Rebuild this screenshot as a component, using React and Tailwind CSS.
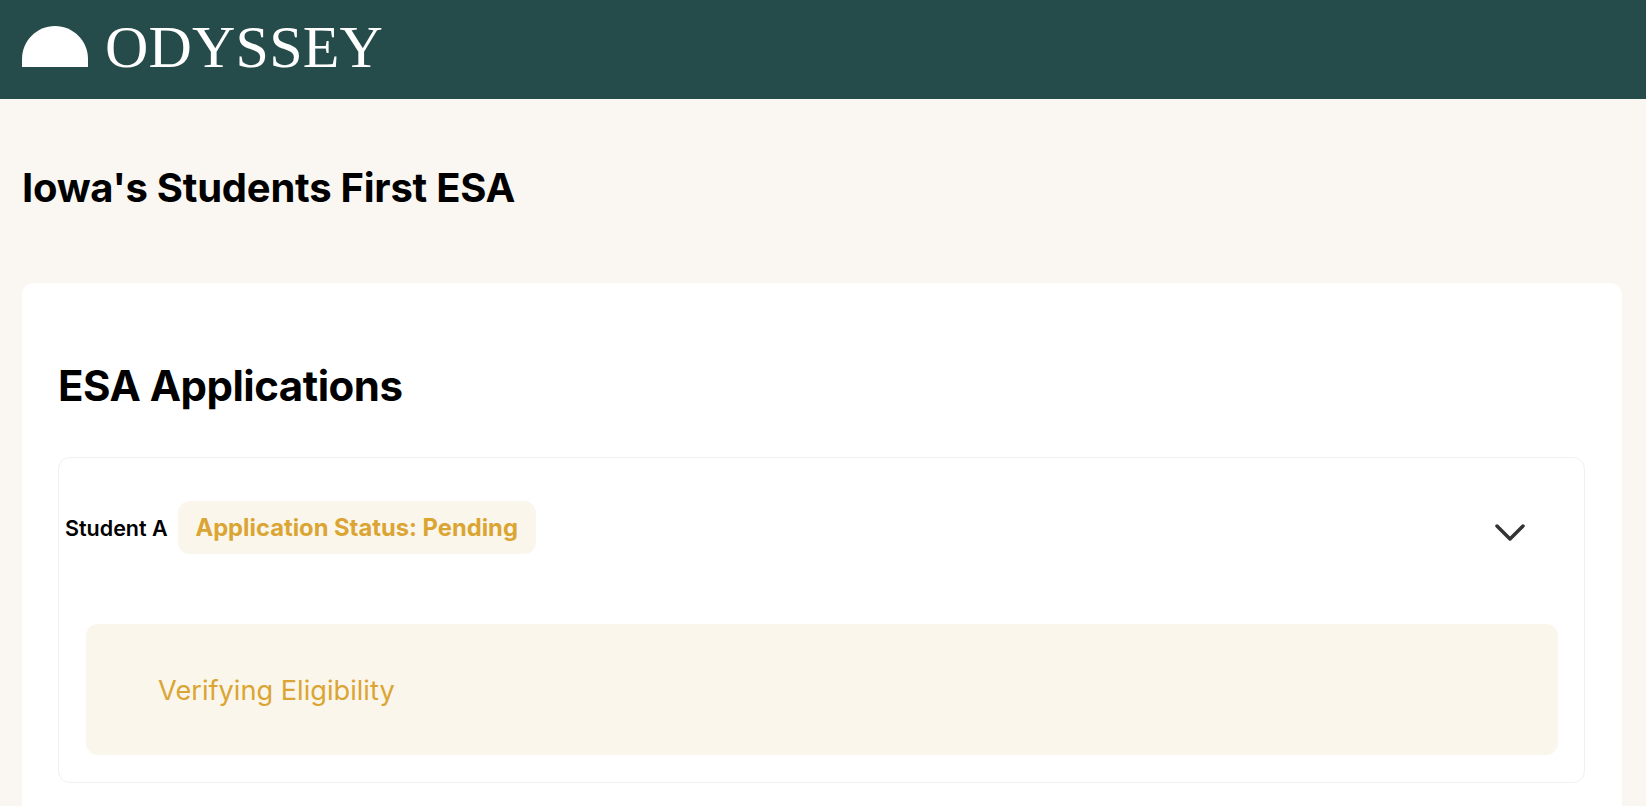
const App = () => {
   return (
      <div className="h-[806px] overflow-hidden bg-[#faf7f3] font-['Inter',sans-serif] text-black">
         <header className="flex h-[99px] items-center gap-[17px] bg-[#254c4a] pb-[6px] pl-[22px]">
            <svg className="h-[41px] w-[66px]" viewBox="0 0 66 41" fill="#fff">
               <path d="M0 41V33C0 14.8 14.8 0 33 0s33 14.8 33 33v8z" />
            </svg>
            <span className="font-['Liberation_Serif',serif] text-[60px] leading-none tracking-[0.2px] text-white">
               ODYSSEY
            </span>
         </header>

         <main className="pr-[24px] pl-[22px]">
            <h1 className="pt-[59px] pb-[65px] text-[40px] leading-[60px] font-bold tracking-[-0.25px]">
               Iowa's Students First ESA
            </h1>

            <section className="rounded-[12px] bg-white pt-[76px] pr-[37px] pb-[36px] pl-[36px]">
               <h2 className="mb-[44px] text-[42px] leading-[54px] font-bold tracking-[-0.5px]">
                  ESA Applications
               </h2>

               <div className="rounded-[12px] border border-[#f1f0ee] pb-[27px]">
                  <div className="flex items-center pt-[43px] pl-[6px]">
                     <span className="pt-[2px] text-[21.5px] font-semibold">Student A</span>
                     <span className="ml-[10px] flex h-[53px] w-[358px] items-center justify-center rounded-[12px] bg-[#faf6eb] text-[23.75px] font-bold text-[#dba534]">
                        Application Status: Pending
                     </span>
                     <svg
                        className="mt-[10px] mr-[59px] ml-auto h-[18px] w-[30px]"
                        viewBox="0 0 30 18"
                        fill="none"
                        stroke="#333"
                        strokeWidth="3.5"
                        strokeLinecap="round"
                        strokeLinejoin="round"
                     >
                        <path d="M2 2l13 13L28 2" />
                     </svg>
                  </div>

                  <div className="mt-[70px] mr-[26px] ml-[27px] flex h-[131px] items-center rounded-[12px] bg-[#faf6eb] pt-[3px] pl-[72px] text-[27.2px] text-[#dba534]">
                     Verifying Eligibility
                  </div>
               </div>
            </section>
         </main>
      </div>
   );
};

export default App;
